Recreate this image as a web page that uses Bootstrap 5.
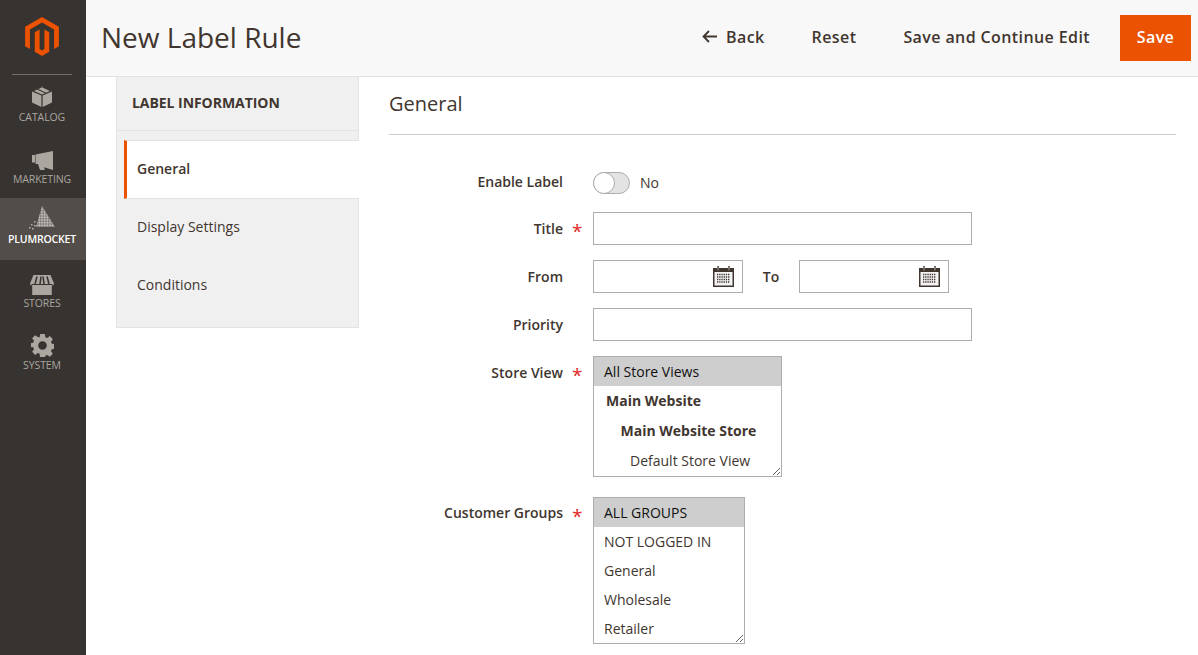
<!DOCTYPE html>
<html lang="en"><head><meta charset="utf-8"><title>New Label Rule</title>
<link rel="stylesheet" href="https://cdn.jsdelivr.net/npm/bootstrap@5.3.0/dist/css/bootstrap.min.css">
<style>
html,body{height:100%;overflow:hidden}
body{font-family:"Open Sans",sans-serif;font-size:14px;color:#41362f;background:#fff}
.shell{height:655px;overflow:hidden}
.side{width:86px;background:#373330;flex:none}
.logo-box{height:75px;border-bottom:1px solid #736e69;padding-top:17px;text-align:center;width:60px;margin-left:12px}
.logo-box svg{display:block;margin:0 auto}
.side-item{height:62px;color:#aaa6a0;font-size:10.5px;line-height:14px;text-align:center;letter-spacing:-.1px;padding-right:2px}
.side-item svg{display:block;margin:0 auto}
.side-item.first{height:61px;padding-top:11px}
.side-item.first svg{margin-bottom:3px}
.side-item.mk{padding-top:15px}
.side-item.mk svg{margin-bottom:2px}
.side-item.active{background:#524d49;color:#fff;font-weight:600;padding-top:8px;letter-spacing:-.2px}
.side-item.active svg{margin-bottom:2px}
.side-item.st{padding-top:15px}
.side-item.st svg{margin-bottom:1px}
.side-item.sy{padding-top:12px}
.side-item.sy svg{margin-bottom:1px}
.topbar{height:77px;background:#f8f8f8;border-bottom:1px solid #e3e3e3;padding-left:15px;padding-bottom:3px}
.page-h{font-size:28px;font-weight:400;color:#41362f;margin:0;line-height:1}
.tb-link{font-size:16px;font-weight:600;color:#41362f;letter-spacing:.4px;text-decoration:none;white-space:nowrap;margin-right:47px}
.tb-link.last{margin-right:0}
.tb-save{background:#eb5202;color:#fff;font-size:16px;font-weight:600;letter-spacing:.4px;width:71px;height:46px;border:0;border-radius:0;padding:0 0 2px;margin:3px 7px 0 30px}
.tb-save:hover{background:#eb5202;color:#fff}
.back-ic{margin-right:9px}
.tabs-col{width:243px;margin-left:30px;flex:none}
.tabs-panel{background:#f0f0f0;border:solid #e3e3e3;border-width:0 1px 1px 1px;height:251px}
.tabs-title{height:54px;border-bottom:1px solid #e3e3e3;padding-left:15px;padding-top:16px;font-weight:700;font-size:14px;line-height:20px;color:#41362f;letter-spacing:-.05px;margin-bottom:9px}
.tab-row{height:58px;padding-left:20px;padding-bottom:4px;display:flex;align-items:center;color:#41362f;text-decoration:none}
.tab-row.on{background:#fff;border-left:3px solid #eb5202;margin-left:7px;margin-right:-1px;padding-left:10px;padding-bottom:2px;border-top:1px solid #e3e3e3;border-bottom:1px solid #e3e3e3;color:#41362f;font-weight:600;height:59px}
.content{width:787px;margin-left:30px;flex:none}
.sect-h{font-size:20px;font-weight:400;line-height:27px;margin:13px 0 0;padding-bottom:17px;border-bottom:1px solid #ccc;color:#41362f}
.frow{display:flex;align-items:flex-start}
.flabel{width:174px;text-align:right;font-weight:600;color:#41362f;flex:none;line-height:19px;padding-top:7px}
.req{width:30px;flex:none;color:#e22626;font-size:19px;line-height:19px;padding-top:10px;padding-left:9px;font-weight:400}
.tx{height:33px;border:1px solid #adadad;background:#fff;border-radius:0;display:block;padding:0 10px;font-size:14px}
.tx:focus{outline:0}
.w379{width:379px}
.dt{width:150px;height:33px;border:1px solid #adadad;display:flex;align-items:center;justify-content:flex-end;padding-right:8px;background:#fff}
.to{width:56px;text-align:center;font-weight:600;line-height:33px}
.sw{width:37px;height:22px;border:1px solid #adadad;border-radius:12px;background:#e3e3e3;position:relative;display:block}
.sw::after{content:"";position:absolute;left:-1px;top:-1px;width:22px;height:22px;border-radius:50%;background:#fff;border:1px solid #adadad}
.msel{display:block;border:1px solid #adadad;background:#fff;border-radius:0;padding:0;font-family:"Open Sans",sans-serif;font-size:14px;color:#41362f;resize:both;overflow:hidden;outline:0}
.msel option{padding:5px 10px;line-height:19px;min-height:0}
.msel optgroup{font-weight:700;padding:0;font-style:normal}
.s1{width:189px;height:121px}
.s1 optgroup{line-height:20px;padding:5px 0 0 10px;height:30px}
.s1 option.leaf{padding-left:36px}
.s2{width:152px;height:147px}
.lab-up{padding-top:6px}
.lab-toggle{padding-top:0}
</style></head>
<body>
<div class="d-flex shell">
<nav class="side d-flex flex-column">
 <div class="logo-box"><svg width="34" height="39" viewBox="1.6 0 20.8 24" fill="#eb5202"><path d="M12 24l-4.455-2.572v-12l2.97-1.715v12.001l1.485.902 1.485-.902V7.713l2.97 1.715v12L12 24zM22.391 6v12l-2.97 1.714V7.713L12 3.43 4.574 7.713v12.001L1.609 18V6L12 0l10.391 6z"/></svg></div>
 <div class="side-item first"><svg width="20" height="21" viewBox="0 0 20 21" fill="#aaa6a0"><path d="M0 5.500 9.400 9.600V21L0 16.600zM20 5.500 10.600 9.600V21l9.400-4.400zM10 8.600l3-1.300L5 3.600 2 5zM14.200 6.800 17.800 5 10 1.300 6.400 3z"/><path d="M9 0h2l-1 .5z"/></svg>CATALOG</div>
 <div class="side-item mk"><svg width="22" height="19" viewBox="0 0 22 19" fill="#aaa6a0"><path d="M1 4h3v7.500H1zM4.500 3.500 22 0v19l-9-2.800 1 2.800H9l-2-6H4.500z"/></svg>MARKETING</div>
 <div class="side-item active"><svg width="28" height="24" viewBox="0 0 28 24"><defs><pattern id="dots" width="1.600" height="1.600" patternUnits="userSpaceOnUse"><rect width="1.200" height="1.200" fill="#d8d5d1"/></pattern></defs><polygon points="14,0 27,21 8,21" fill="url(#dots)"/><g fill="#b5b1ac"><rect x="6" y="15" width="1.500" height="1.500"/><rect x="3" y="18" width="1.500" height="1.500"/><rect x="6" y="19" width="1.500" height="1.500"/><rect x="1" y="21" width="1.500" height="1.500"/><rect x="4" y="22" width="1.500" height="1.500"/></g></svg>PLUMROCKET</div>
 <div class="side-item st"><svg width="24" height="20" viewBox="0 0 24 20" fill="#aaa6a0"><path d="M3.500 0h17L24 8.500c0 1.300-1 2-2.200 2V20H2.200v-9.500C1 10.500 0 9.800 0 8.500z"/><g stroke="#373330" stroke-width="1.500"><path d="M7 1.500 5 9M11 1.500 10 9M13 1.500 14 9M17 1.500 19 9"/></g><path d="M1.500 9.500h21" stroke="#373330" stroke-width="1" fill="none"/></svg>STORES</div>
 <div class="side-item sy"><svg width="23" height="23" viewBox="0 0 24 24" fill="#aaa6a0"><path fill-rule="evenodd" d="M9.600 0h4.800l.6 3.300 1.900.8 2.800-1.900 3.100 3.200-1.900 2.700.8 2 3.300.6v4.600l-3.300.6-.8 2 1.900 2.700-3.100 3.200-2.800-1.900-1.900.8-.6 3.300H9.600L9 20.700l-1.900-.8-2.800 1.900-3.100-3.200 1.900-2.700-.8-2-3.300-.6V9.700l3.300-.6.800-2-1.900-2.700 3.100-3.200 2.800 1.900L9 3.300zM12 7.500a4.500 4.500 0 1 0 0 9 4.500 4.500 0 0 0 0-9z"/></svg>SYSTEM</div>
</nav>
<div class="flex-grow-1 d-flex flex-column" style="min-width:0">
 <header class="topbar d-flex align-items-center">
  <h1 class="page-h flex-grow-1">New Label Rule</h1>
  <a href="#" class="tb-link d-flex align-items-center"><svg width="15" height="13" viewBox="0 0 15 13" fill="none" stroke="#41362f" stroke-width="1.800" class="back-ic"><path d="M15 6.500H2M7 1 1.500 6.500 7 12"/></svg>Back</a>
  <a href="#" class="tb-link">Reset</a>
  <a href="#" class="tb-link last">Save and Continue Edit</a>
  <button class="btn tb-save" type="button">Save</button>
 </header>
 <div class="d-flex">
  <aside class="tabs-col">
   <div class="tabs-panel">
    <div class="tabs-title">LABEL INFORMATION</div>
    <a href="#" class="tab-row on">General</a>
    <a href="#" class="tab-row">Display Settings</a>
    <a href="#" class="tab-row">Conditions</a>
   </div>
  </aside>
  <main class="content">
   <h2 class="sect-h">General</h2>
   <div class="frow" style="margin-top:37px"><div class="flabel lab-toggle">Enable Label</div><div style="width:30px"></div><span class="sw"></span><span style="margin-left:10px;line-height:22px">No</span></div>
   <div class="frow" style="margin-top:18px"><div class="flabel">Title</div><div class="req">*</div><input class="tx w379" type="text" aria-label="Title"></div>
   <div class="frow" style="margin-top:15px"><div class="flabel">From</div><div style="width:30px"></div><div class="dt"><svg width="21" height="21" viewBox="0 0 21 21"><path fill="#41362f" d="M0 2h4v-.500h2V2h9v-.500h2V2h4v19H0z"/><rect x="1.500" y="6" width="18" height="13.500" fill="#f3f3f3"/><g fill="#fff"><rect x="4.300" y="0" width="1.400" height="4.500" stroke="#41362f" stroke-width=".6"/><rect x="15.300" y="0" width="1.400" height="4.500" stroke="#41362f" stroke-width=".6"/></g><path d="M4 8.500h13M4 11h13M4 13.500h13M4 16h13" stroke="#41362f" stroke-width="1.300" stroke-dasharray="1.300 .9"/></svg></div><div class="to">To</div><div class="dt"><svg width="21" height="21" viewBox="0 0 21 21"><path fill="#41362f" d="M0 2h4v-.500h2V2h9v-.500h2V2h4v19H0z"/><rect x="1.500" y="6" width="18" height="13.500" fill="#f3f3f3"/><g fill="#fff"><rect x="4.300" y="0" width="1.400" height="4.500" stroke="#41362f" stroke-width=".6"/><rect x="15.300" y="0" width="1.400" height="4.500" stroke="#41362f" stroke-width=".6"/></g><path d="M4 8.500h13M4 11h13M4 13.500h13M4 16h13" stroke="#41362f" stroke-width="1.300" stroke-dasharray="1.300 .9"/></svg></div></div>
   <div class="frow" style="margin-top:15px"><div class="flabel">Priority</div><div style="width:30px"></div><input class="tx w379" type="text" aria-label="Priority"></div>
   <div class="frow" style="margin-top:15px"><div class="flabel">Store View</div><div class="req">*</div><select class="msel s1" multiple aria-label="Store View"><option selected>All Store Views</option><optgroup label="Main Website"></optgroup><optgroup label="&#160;&#160;&#160;&#160;Main Website Store"></optgroup><option class="leaf">Default Store View</option></select></div>
   <div class="frow" style="margin-top:20px"><div class="flabel lab-up">Customer Groups</div><div class="req">*</div><select class="msel s2" multiple aria-label="Customer Groups"><option selected>ALL GROUPS</option><option>NOT LOGGED IN</option><option>General</option><option>Wholesale</option><option>Retailer</option></select></div>
  </main>
 </div>
</div>
</div>
<script src="https://cdn.jsdelivr.net/npm/bootstrap@5.3.0/dist/js/bootstrap.bundle.min.js"></script>
</body></html>
